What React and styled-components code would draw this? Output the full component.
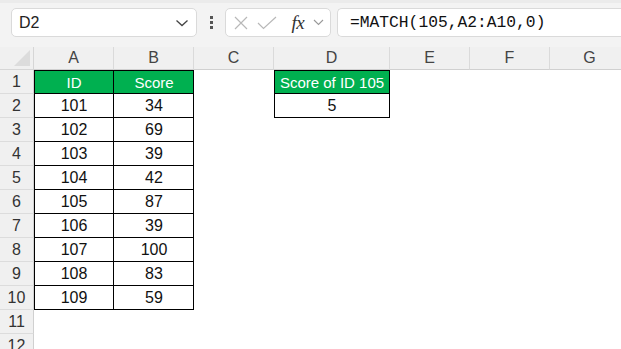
import React from 'react';
import styled, { createGlobalStyle, css } from 'styled-components';

const GlobalStyle = createGlobalStyle`
  html, body { margin: 0; padding: 0; background: #fff; }
  body { font-family: "Liberation Sans", Arial, sans-serif; overflow: hidden; }
`;

const columns = [
  { key: 'A', width: 80 },
  { key: 'B', width: 80 },
  { key: 'C', width: 80 },
  { key: 'D', width: 116 },
  { key: 'E', width: 80 },
  { key: 'F', width: 80 },
  { key: 'G', width: 80 },
  { key: 'H', width: 80 },
];

const data = [
  ['101', '34'],
  ['102', '69'],
  ['103', '39'],
  ['104', '42'],
  ['105', '87'],
  ['106', '39'],
  ['107', '100'],
  ['108', '83'],
  ['109', '59'],
];

export default function App() {
  const rows = [];
  for (let r = 1; r <= 12; r++) {
    const cells = columns.map((col, c) => {
      let text = '';
      let header = false;
      let bordered = false;
      if (c <= 1 && r <= 10) {
        bordered = true;
        if (r === 1) {
          header = true;
          text = c === 0 ? 'ID' : 'Score';
        } else {
          text = data[r - 2][c];
        }
      }
      if (col.key === 'D' && r <= 2) {
        bordered = true;
        header = r === 1;
        text = r === 1 ? 'Score of ID 105' : '5';
      }
      return (
        <Cell
          key={col.key}
          $header={header}
          $bordered={bordered}
          $firstCol={c === 0 || col.key === 'D'}
          $firstRow={r === 1}
        >
          {text}
        </Cell>
      );
    });
    rows.push(
      <React.Fragment key={r}>
        <RowHead>{r}</RowHead>
        {cells}
      </React.Fragment>
    );
  }

  return (
    <>
      <GlobalStyle />
      <Page>
        <Toolbar>
          <NameBox>
            <span>D2</span>
            <Chevron width="14" height="8" viewBox="0 0 14 8">
              <path d="M1.5 1.5 L7 6.5 L12.5 1.5" fill="none" stroke="#444" strokeWidth="1.3" />
            </Chevron>
          </NameBox>
          <Dots>
            <i /><i /><i />
          </Dots>
          <FxBox>
            <svg width="14" height="14" viewBox="0 0 14 14">
              <path d="M1 1 L13 13 M13 1 L1 13" stroke="#b8b8b8" strokeWidth="1.2" fill="none" />
            </svg>
            <svg width="20" height="14" viewBox="0 0 20 14">
              <path d="M1 7 L6.5 12.5 L19 1" stroke="#b8b8b8" strokeWidth="1.2" fill="none" />
            </svg>
            <FxLabel>fx</FxLabel>
            <svg width="11" height="7" viewBox="0 0 11 7">
              <path d="M1 1 L5.5 5.5 L10 1" fill="none" stroke="#999" strokeWidth="1.1" />
            </svg>
          </FxBox>
          <FormulaBox>=MATCH(105,A2:A10,0)</FormulaBox>
        </Toolbar>
        <Sheet>
          <Corner>
            <svg width="16" height="16" viewBox="0 0 16 16">
              <path d="M16 0 L16 16 L0 16 Z" fill="#dcdcdc" />
            </svg>
          </Corner>
          {columns.map((col) => (
            <ColHead key={col.key}>{col.key}</ColHead>
          ))}
          {rows}
        </Sheet>
      </Page>
    </>
  );
}

const Page = styled.div`
  width: 621px;
  height: 349px;
  overflow: hidden;
  background: #fff;
`;

const Toolbar = styled.div`
  height: 47px;
  background: #f3f3f3;
  border-top: 3px solid #ebebeb;
  box-sizing: border-box;
  display: flex;
  align-items: flex-start;
  padding: 5px 0 0 11px;
`;

const boxBase = css`
  height: 29px;
  box-sizing: border-box;
  background: #fff;
  border: 1px solid #dadada;
  border-radius: 5px;
  display: flex;
  align-items: center;
`;

const NameBox = styled.div`
  ${boxBase};
  width: 186px;
  padding: 0 0 0 7px;
  justify-content: space-between;
  font-size: 16px;
  color: #222;
`;

const Chevron = styled.svg`
  margin-right: 7px;
`;

const Dots = styled.div`
  width: 28px;
  height: 29px;
  display: flex;
  flex-direction: column;
  align-items: center;
  justify-content: center;
  gap: 2px;

  i {
    width: 3px;
    height: 3px;
    background: #555;
    display: block;
  }
`;

const FxBox = styled.div`
  ${boxBase};
  width: 106px;
  padding: 0 6px 0 8px;
  justify-content: space-between;
`;

const FxLabel = styled.span`
  font-family: "Liberation Serif", "Times New Roman", serif;
  font-style: italic;
  font-size: 19px;
  color: #333;
  margin-left: 6px;
  letter-spacing: -0.5px;
`;

const FormulaBox = styled.div`
  ${boxBase};
  flex: 1;
  margin-left: 6px;
  border-right: none;
  border-radius: 5px 0 0 5px;
  padding-left: 12px;
  font-family: "Liberation Mono", "Courier New", monospace;
  font-size: 16.3px;
  color: #111;
`;

const Sheet = styled.div`
  display: grid;
  grid-template-columns: 34px ${columns.map((c) => `${c.width}px`).join(' ')};
  grid-template-rows: 23px;
  grid-auto-rows: 24px;
`;

const headBase = css`
  background: #f0f0f0;
  color: #444;
  font-size: 16px;
  display: flex;
  align-items: center;
  justify-content: center;
  box-sizing: border-box;
`;

const Corner = styled.div`
  ${headBase};
  align-items: flex-end;
  justify-content: flex-end;
  border-right: 1px solid #d6d6d6;
  border-bottom: 1px solid #d6d6d6;
  padding: 0 3px 3px 0;
`;

const ColHead = styled.div`
  ${headBase};
  border-right: 1px solid #dadada;
  border-bottom: 1px solid #d0d0d0;
`;

const RowHead = styled.div`
  ${headBase};
  color: #333;
  border-right: 1px solid #d0d0d0;
  border-bottom: 1px solid #dcdcdc;
`;

const Cell = styled.div`
  display: flex;
  align-items: center;
  justify-content: center;
  font-size: ${(p) => (p.$header ? '15px' : '16px')};
  color: ${(p) => (p.$header ? '#fff' : '#111')};
  background: ${(p) => (p.$header ? '#00b050' : '#fff')};
  white-space: nowrap;
  ${(p) =>
    p.$bordered &&
    css`
      box-shadow: inset -1px -1px 0 #000
        ${p.$firstCol ? ', inset 1px 0 0 #000' : ''}
        ${p.$firstRow ? ', inset 0 1px 0 #000' : ''};
    `}
`;
